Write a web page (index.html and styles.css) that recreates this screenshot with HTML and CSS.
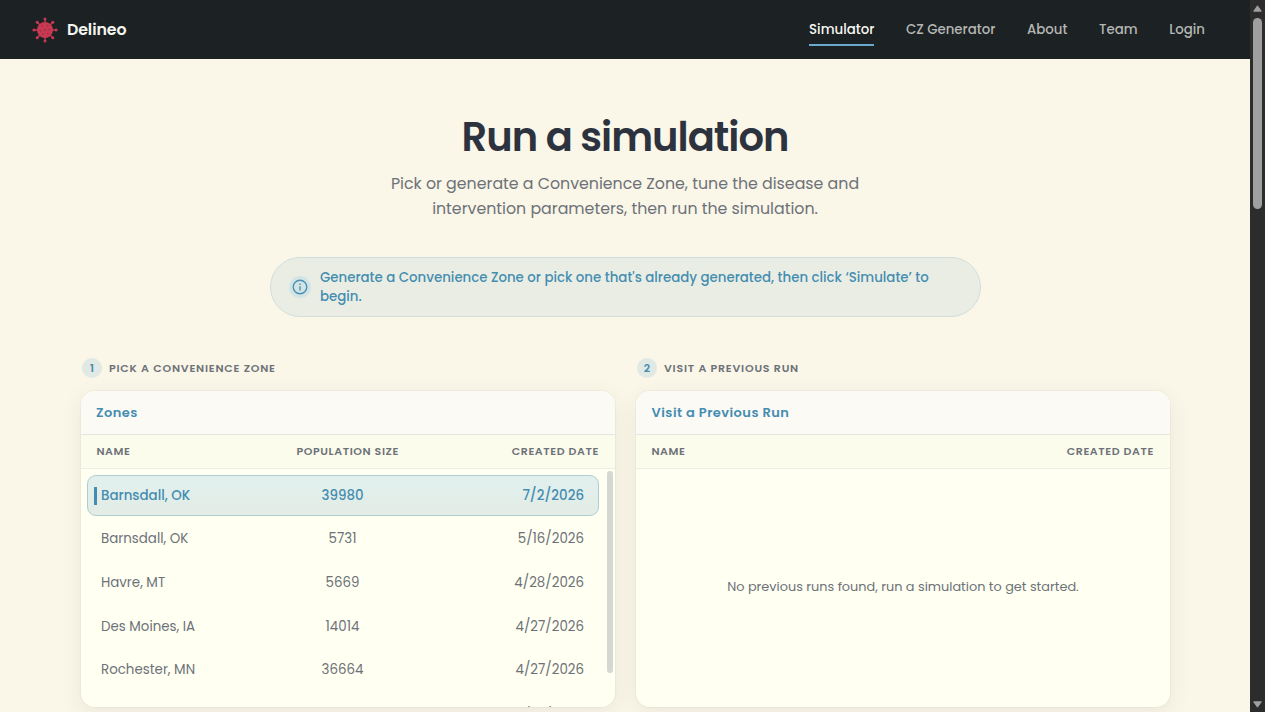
FILE: index.html
```
<!DOCTYPE html>
<html lang="en">
<head>
<meta charset="utf-8">
<title>Delineo</title>
<link rel="stylesheet" href="styles.css">
</head>
<body>
<div class="window">
  <div class="page">
    <header class="nav">
      <div class="brand">
        <svg class="brand-icon" viewBox="0 0 26 26" width="26" height="26">
          <g stroke="#c93a52" stroke-width="1.3" fill="none">
            <path d="M13 2V24M2 13H24M5.2 5.2L20.8 20.8M20.8 5.2L5.2 20.8"/>
          </g>
          <g fill="#c93a52">
            <circle cx="13" cy="13" r="8"/>
            <circle cx="13" cy="1.9" r="1.5"/><circle cx="13" cy="24.1" r="1.5"/>
            <circle cx="1.9" cy="13" r="1.5"/><circle cx="24.1" cy="13" r="1.5"/>
            <circle cx="5.2" cy="5.2" r="1.5"/><circle cx="20.8" cy="5.2" r="1.5"/>
            <circle cx="5.2" cy="20.8" r="1.5"/><circle cx="20.8" cy="20.8" r="1.5"/>
          </g>
          <g fill="#ae3049">
            <circle cx="13" cy="13" r="1.3"/><circle cx="10" cy="9" r="1.1"/><circle cx="15.5" cy="8.7" r="1"/>
            <circle cx="8.5" cy="13.8" r="1"/><circle cx="17.4" cy="12.6" r="1.1"/><circle cx="11" cy="17.2" r="1.1"/><circle cx="15.8" cy="16.8" r="1"/>
          </g>
        </svg>
        <span class="brand-name">Delineo</span>
      </div>
      <nav class="links">
        <a class="link link-active">Simulator</a>
        <a class="link">CZ Generator</a>
        <a class="link">About</a>
        <a class="link">Team</a>
        <a class="link">Login</a>
      </nav>
    </header>
    <main class="main">
      <h1 class="title">Run a simulation</h1>
      <p class="lead">Pick or generate a Convenience Zone, tune the disease and<br>intervention parameters, then run the simulation.</p>
      <div class="notice">
        <span class="notice-icon">
          <svg viewBox="0 0 16 16" width="16" height="16" fill="none" stroke="#4c91b3" stroke-width="1.4">
            <circle cx="8" cy="8" r="6.8"/><path d="M8 7.2V11.4M8 4.4V5.9"/>
          </svg>
        </span>
        <p class="notice-text">Generate a Convenience Zone or pick one that's already generated, then click ‘Simulate’ to<br>begin.</p>
      </div>
      <div class="columns">
        <section class="column">
          <div class="step"><span class="badge">1</span><span class="step-text">Pick a Convenience Zone</span></div>
          <div class="card">
            <h2 class="card-title">Zones</h2>
            <div class="thead thead-three"><span>Name</span><span class="center">Population size</span><span class="right">Created date</span></div>
            <div class="body">
              <div class="rows">
                <div class="row selected"><span class="name">Barnsdall, OK</span><span class="center">39980</span><span class="right">7/2/2026</span></div>
                <div class="row"><span>Barnsdall, OK</span><span class="center">5731</span><span class="right">5/16/2026</span></div>
                <div class="row"><span>Havre, MT</span><span class="center">5669</span><span class="right">4/28/2026</span></div>
                <div class="row"><span>Des Moines, IA</span><span class="center">14014</span><span class="right">4/27/2026</span></div>
                <div class="row"><span>Rochester, MN</span><span class="center">36664</span><span class="right">4/27/2026</span></div>
                <div class="row"><span></span><span></span><span class="right">4/27/2026</span></div>
              </div>
              <div class="list-track"><div class="list-thumb"></div></div>
            </div>
          </div>
        </section>
        <section class="column">
          <div class="step"><span class="badge">2</span><span class="step-text">Visit a previous run</span></div>
          <div class="card">
            <h2 class="card-title title-previous">Visit a Previous Run</h2>
            <div class="thead thead-two"><span>Name</span><span class="right">Created date</span></div>
            <div class="body empty"><p class="empty-text">No previous runs found, run a simulation to get started.</p></div>
          </div>
        </section>
      </div>
    </main>
  </div>
  <div class="scrollbar">
    <svg class="arrow" width="9" height="7" viewBox="0 0 9 7"><path d="M4.5 .8L8.3 6.2H.7Z" fill="#9f9f9f" stroke="#9f9f9f" stroke-linejoin="round"/></svg>
    <div class="scroll-thumb"></div>
    <svg class="arrow" width="9" height="7" viewBox="0 0 9 7"><path d="M4.5 6.2L8.3 .8H.7Z" fill="#9f9f9f" stroke="#9f9f9f" stroke-linejoin="round"/></svg>
  </div>
</div>
</body>
</html>
```
FILE: styles.css
```
* { box-sizing: border-box; margin: 0; padding: 0; }
body {
  font-family: Poppins, Inter, "Open Sans", sans-serif;
  color: #6d7278;
  overflow: hidden;
}
.window { display: flex; width: 1265px; height: 712px; overflow: hidden; }
.page { width: 1250px; height: 712px; overflow: hidden; background: #faf6e8; }
.nav {
  display: flex; justify-content: space-between; align-items: center;
  height: 59px; padding: 0 45px 0 31.5px; background: #1c2123;
}
.brand { display: flex; align-items: center; gap: 9.5px; }
.brand-name { color: #f4f5f0; font-size: 15.8px; font-weight: 600; line-height: 22px; letter-spacing: -.1px; }
.links { display: flex; gap: 31.6px; }
.link {
  padding: 6px 0 4px; font-size: 13.35px; line-height: 20px; font-weight: 500; white-space: nowrap;
  color: #b4b6b4; border-bottom: 2px solid transparent;
}
.link-active { color: #f7f7f2; border-color: #68a9cc; }
.main { padding: 54px 80px 0 81px; }
.title {
  padding-right: 1px; text-align: center; font-size: 40px; line-height: 48px; font-weight: 600; letter-spacing: -1px; color: #2c333e;
}
.lead { margin-top: 10px; padding-right: 1px; text-align: center; font-size: 15.8px; line-height: 25px; }
.notice {
  display: flex; align-items: center; gap: 9.5px;
  width: 711px; height: 60px; margin: 36px auto 0; padding: 0 17.5px;
  background: #eaede4; border: 1px solid #cfdfdc; border-radius: 30px;
}
.notice-icon {
  display: flex; align-items: center; justify-content: center;
  width: 22px; height: 22px; border-radius: 50%; background: #d3e4e5;
}
.notice-text { color: #448db1; font-size: 13.35px; line-height: 19px; font-weight: 500; white-space: nowrap; }
.columns { display: grid; grid-template-columns: 534px 534px; gap: 21px; margin-top: 41px; }
.step { display: flex; align-items: center; gap: 7px; height: 20px; margin-left: 1px; }
.badge {
  width: 20px; height: 20px; border-radius: 50%; background: #e0e9e4;
  color: #448db1; font-size: 11px; line-height: 20px; font-weight: 600; text-align: center;
}
.step-text { font-size: 11px; font-weight: 600; text-transform: uppercase; letter-spacing: .8px; white-space: nowrap; }
.card {
  height: 316px; margin-top: 13px; overflow: hidden; border-radius: 14px; background: #fffff2;
  box-shadow: 0 0 0 1px rgba(70, 80, 80, .035), 0 6px 22px rgba(60, 60, 50, .08);
}
.card-title {
  height: 44px; padding: 0 15px; background: #fbfaf5; border-bottom: 1px solid #e4e6e3;
  color: #448db1; font-size: 13px; line-height: 43px; font-weight: 600; letter-spacing: .45px;
}
.title-previous { padding-left: 15.6px; }
.thead {
  display: grid; align-items: center; height: 34px; padding: 0 16px 0 15.4px;
  background: #fcfced; border-bottom: 1px solid #ecede3;
  font-size: 11px; font-weight: 600; text-transform: uppercase; letter-spacing: .62px;
}
.thead-three, .row { grid-template-columns: 1fr 1fr 1fr; }
.thead-two { grid-template-columns: 1fr 1fr; }
.center { text-align: center; }
.right { text-align: right; }
.body { display: flex; justify-content: space-between; height: 238px; overflow: hidden; }
.rows { width: 512px; margin: 6px 0 0 6px; }
.row {
  display: grid; align-items: center; height: 41.3px; margin-bottom: 2.4px; padding: 0 15px 0 14px;
  font-size: 13.4px; line-height: 18px;
}
.selected {
  padding: 0 14px 0 13px; border: 1px solid #aecdd2; border-radius: 9px;
  background: linear-gradient(#e1f0ee, #e3ece5); color: #448db1; font-weight: 500;
}
.row:last-child { padding-top: 3px; }
.name { margin-left: -7px; padding-left: 4px; border-left: 3px solid #448db1; }
.list-track { width: 8px; padding-top: 2px; }
.list-thumb { width: 6px; height: 202px; border-radius: 3px; background: #d5d7d3; }
.empty { justify-content: center; align-items: center; padding-bottom: 2px; }
.empty-text { font-size: 12.85px; white-space: nowrap; }
.scrollbar {
  display: flex; flex-direction: column; align-items: center; width: 15px; height: 712px;
  padding: 5px 0 4px; background: #2c2c2c;
}
.scroll-thumb { width: 9px; height: 191px; margin: 6px 0 auto; border-radius: 5px; background: #9f9f9f; }
```
